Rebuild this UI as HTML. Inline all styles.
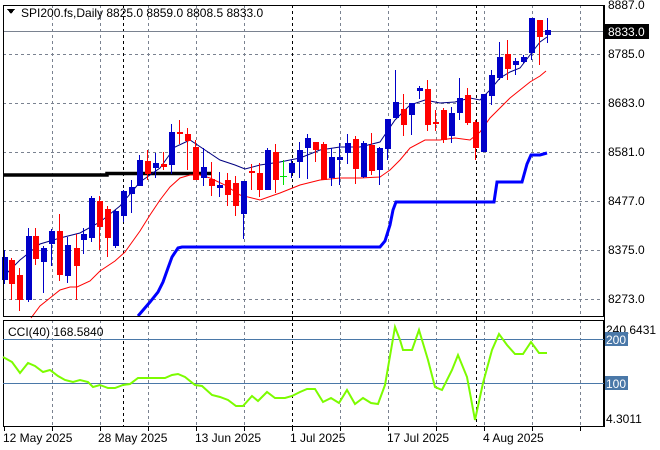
<!DOCTYPE html>
<html><head><meta charset="utf-8"><style>
html,body{margin:0;padding:0;background:#fff;width:660px;height:450px;overflow:hidden}
svg text{font-family:"Liberation Sans",sans-serif;font-size:12px}
</style></head><body>
<svg id="s" width="660" height="450" xmlns="http://www.w3.org/2000/svg" shape-rendering="crispEdges">
<rect x="0" y="0" width="660" height="450" fill="#fff"/>
<g id="grid" stroke="#7a8290" stroke-dasharray="3,3" stroke-width="1"></g>
<g stroke="#000" stroke-dasharray="3,3">
<line x1="123.5" y1="5" x2="123.5" y2="426"/>
<line x1="292.5" y1="5" x2="292.5" y2="426"/>
<line x1="476.5" y1="5" x2="476.5" y2="426"/>
</g>
<line x1="3" y1="31.5" x2="604" y2="31.5" stroke="#7a8290"/>
<g shape-rendering="auto">
<polyline fill="none" stroke="#000" stroke-width="3.5" points="3,175 107,175 107,173.5 212,173.5"/>
<polyline fill="none" stroke="#0000ff" stroke-width="3" points="138,316 150,302 158,292 163,282 168,268 172,257 178,248 182,247 380,247 385,241 390,225 393,210 396,202 494,202 497,182 522,182 527,164 531,155 540,155 547,153"/>
<polyline fill="none" stroke="#000080" stroke-width="1" points="5,275 20,260 40,244 60,238 80,233 100,222 120,206 140,182 160,168 175,147 190,140 205,150 220,160 235,165 245,169 260,165 280,162 300,158 320,150 340,147 360,147 380,142 395,120 410,105 425,100 440,103 455,102 470,98 480,100 490,90 500,78 510,72 520,68 530,55 540,42 547,37"/>
<polyline fill="none" stroke="#ff0000" stroke-width="1" points="31,318 40,306 50,298 60,290 70,287 77,287 90,281 100,271 115,261 125,252 140,231 150,215 160,200 170,187 180,178 190,175 200,175 210,178 225,185 240,195 260,200 280,193 300,185 320,180 340,178 360,178 380,177 390,170 400,160 410,148 425,140 440,140 455,138 470,140 480,132 490,118 500,108 510,98 520,90 530,82 540,76 546,71"/>
</g>
<g id="c"></g>
<!-- frames -->
<rect x="3.5" y="5.5" width="600" height="311" fill="none" stroke="#000"/>
<rect x="3.5" y="320.5" width="600" height="106" fill="none" stroke="#000"/>
<line x1="3" y1="339.5" x2="604" y2="339.5" stroke="#4a78a8"/>
<line x1="3" y1="383.5" x2="604" y2="383.5" stroke="#4a78a8"/>
<polyline shape-rendering="auto" fill="none" stroke="#7cfc00" stroke-width="2" points="3,357 12,362 20,373 28,363 35,366 43,372 50,370 58,376 65,380 73,382 80,380 88,382 93,387 100,385 108,388 115,388 123,385 130,384 138,378 145,378 155,378 165,378 172,375 178,374 185,377 195,385 202,386 212,395 220,397 228,400 236,406 243,406 252,396 258,401 267,392 275,398 285,398 292,396 300,392 307,389 315,389 323,402 331,398 339,403 347,390 355,404 363,398 371,403 378,404 385,385 395,327 400,340 403,350 412,350 419,330 428,360 435,387 442,390 452,370 458,355 467,377 475,420 483,383 492,350 499,334 507,345 515,354 523,354 531,342 539,353 547,353"/>
<!-- header -->
<polygon points="7,9 15,9 11,14" fill="#000"/>
<text x="21" y="17" fill="#000">SPI200.fs,Daily  8825.0 8859.0 8808.5 8833.0</text>
<text x="8" y="336" fill="#000">CCI(40) 168.5840</text>
<!-- right axis -->
<g fill="#000">
<text x="608" y="9">8887.0</text>
<text x="608" y="58">8785.0</text>
<text x="608" y="107">8683.0</text>
<text x="608" y="156">8581.0</text>
<text x="608" y="205">8477.0</text>
<text x="608" y="254">8375.0</text>
<text x="608" y="303">8273.0</text>
<text x="606" y="334">240.6431</text>
<text x="606" y="423">4.3011</text>
</g>
<rect x="605" y="24" width="44" height="15" fill="#000"/>
<text x="608" y="36" fill="#fff">8833.0</text>
<rect x="605" y="332" width="23" height="14" fill="#4a78a8"/>
<text x="606" y="344" fill="#fff">200</text>
<rect x="605" y="376" width="23" height="14" fill="#4a78a8"/>
<text x="606" y="388" fill="#fff">100</text>
<g stroke="#000"><line x1="604.5" y1="5" x2="604.5" y2="427"/></g>
<!-- dates -->
<g fill="#000">
<text x="3" y="442">12 May 2025</text>
<text x="98" y="442">28 May 2025</text>
<text x="195" y="442">13 Jun 2025</text>
<text x="290" y="442">1 Jul 2025</text>
<text x="387" y="442">17 Jul 2025</text>
<text x="483" y="442">4 Aug 2025</text>
</g>
<g id="ticks" stroke="#000"></g>
</svg>
<script>
var NS="http://www.w3.org/2000/svg";
function el(p,t,a){var e=document.createElementNS(NS,t);for(var k in a)e.setAttribute(k,a[k]);p.appendChild(e);return e;}
var g=document.getElementById('grid');
[52,100,148,196,244,340,388,436,484,532,580].forEach(function(x){
 el(g,'line',{x1:x+.5,y1:5,x2:x+.5,y2:316});el(g,'line',{x1:x+.5,y1:320,x2:x+.5,y2:426});});
[54,103,152,201,250,299].forEach(function(y){el(g,'line',{x1:3,y1:y+.5,x2:604,y2:y+.5});});
var t=document.getElementById('ticks');
[4,52,100,148,196,244,292,340,388,436,484,532,580].forEach(function(x){el(t,'line',{x1:x+.5,y1:426,x2:x+.5,y2:431});});
// x, open, close, high, low (pixel y)
var C=[
[4,280,257,250,284],[11,260,284,258,300],[19,275,300,268,311],[28,300,236,228,302],[35,236,259,228,265],
[43,262,248,246,293],[51,244,231,229,266],[59,231,275,214,281],[67,276,245,237,283],[76,248,266,234,300],
[83,240,234,228,254],[91,238,198,196,242],[99,201,227,196,250],[107,209,238,206,257],[115,246,211,210,248],
[123,216,191,190,222],[131,194,187,180,213],[139,186,160,155,186],[147,161,174,150,180],[155,168,163,153,178],
[163,164,167,152,170],[171,165,132,124,174],[179,132,134,120,144],[187,134,141,128,170],[195,147,180,140,177],
[203,178,167,148,186],[211,179,186,162,196],[219,188,185,172,197],[227,180,195,173,206],[235,183,206,176,216],
[243,214,181,181,239],[251,171,173,164,190],[259,173,190,163,197],[267,190,150,148,190],[275,152,180,144,193],
[291,173,163,160,178],[299,162,150,142,178],[307,148,138,134,179],[315,142,150,142,162],
[323,144,180,142,180],[331,178,157,148,186],[339,160,157,143,185],[347,153,143,134,164],[355,139,169,136,184],
[363,177,143,141,178],[371,145,171,133,175],[379,170,148,147,185],[387,149,119,119,160],[395,118,102,70,118],
[403,109,125,94,136],[411,115,103,103,135],[419,91,88,86,99],[427,89,125,80,131],[435,122,124,110,131],
[443,110,140,108,143],[451,136,113,107,143],[459,113,98,78,120],[467,95,123,88,125],[475,122,148,120,160],
[483,152,94,94,152],[491,96,75,70,105],[499,78,57,42,80],[507,54,69,40,80],[515,65,61,58,75],
[523,62,57,55,63],[531,53,18,18,60],[539,20,37,20,65],[547,35,30,18,43]];
var c=document.getElementById('c');
C.forEach(function(d){var x=d[0],o=d[1],cl=d[2],up=cl<o,col=up?'#0000c8':'#ff0000';
 el(c,'line',{x1:x+.5,y1:d[3],x2:x+.5,y2:d[4],stroke:up?'#0000c8':'#ff0000'});
 var top=Math.min(o,cl),h=Math.max(Math.abs(o-cl),2);
 el(c,'rect',{x:x-2,y:top,width:6,height:h,fill:col});});
el(c,'line',{x1:283.5,y1:160,x2:283.5,y2:185,stroke:'#00e000'});
el(c,'line',{x1:280,y1:176.5,x2:287,y2:176.5,stroke:'#00e000'});
</script>
</body></html>
